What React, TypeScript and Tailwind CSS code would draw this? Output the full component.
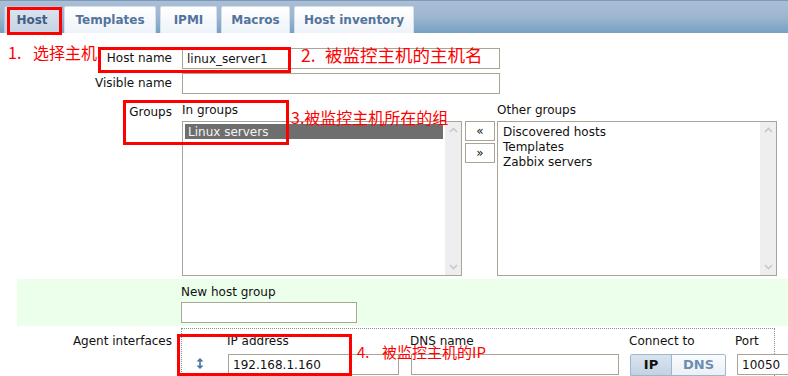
import React from "react";

const tabs = [
  { label: "Host", w: "w-[56px]", active: true },
  { label: "Templates", w: "w-[92px]" },
  { label: "IPMI", w: "w-[57px]" },
  { label: "Macros", w: "w-[69px]" },
  { label: "Host inventory", w: "w-[120px]" },
];

function Chevron({ up }: { up?: boolean }) {
  return (
    <svg width="9" height="6" viewBox="0 0 9 6" className="block">
      <path d={up ? "M1 5 L4.5 1.5 L8 5" : "M1 1 L4.5 4.5 L8 1"} fill="none" stroke="#c8c8c8" strokeWidth="1.6" />
    </svg>
  );
}

function ListBox({ items, selected }: { items: string[]; selected?: number }) {
  return (
    <div className="flex h-[155px] w-[280px] border border-[#a9a697] bg-white">
      <div className="flex-1 pt-[2px] pl-[2px] pr-[2px]">
        {items.map((it, i) => (
          <div
            key={it}
            className={
              i === selected
                ? "h-[15px] bg-[#6e6e6e] pl-[3px] leading-[16px] text-[#f4f4f4]"
                : "h-[15px] pl-[3px] leading-[16px] text-[#111]"
            }
          >
            {it}
          </div>
        ))}
      </div>
      <div className="flex w-[16px] flex-col items-center justify-between bg-[#eeeeee] py-[5px]">
        <Chevron up />
        <Chevron />
      </div>
    </div>
  );
}

function Input({ w, value }: { w: string; value?: string }) {
  return (
    <div className={`${w} h-[21px] shrink-0 border border-[#a9a697] bg-white pl-[4px] leading-[20px] text-[#111]`}>
      {value}
    </div>
  );
}

function Row({ label, children, className }: { label: string; children: React.ReactNode; className?: string }) {
  return (
    <div className={`flex ${className ?? ""}`}>
      <div className="w-[172px] shrink-0 text-right leading-[21px]">{label}</div>
      <div className="ml-[10px]">{children}</div>
    </div>
  );
}

export default function App() {
  return (
    <div
      className="relative h-[376px] w-[788px] overflow-hidden bg-white text-[12px] text-[#111]"
      style={{ fontFamily: '"DejaVu Sans", Verdana, sans-serif' }}
    >
      {/* tab bar */}
      <div className="flex h-[33px] items-end gap-[4px] border-t border-[#7e99b8] bg-gradient-to-b from-[#a9bfd6] via-[#9db6d0] to-[#76a0c5] pl-[4px]">
        {tabs.map((t) => (
          <div
            key={t.label}
            className={`${t.w} flex h-[27px] items-center justify-center rounded-t-[2px] border border-b-0 text-[12px] font-bold ${
              t.active
                ? "border-[#b8c8da] bg-gradient-to-b from-[#dce5ef] to-[#c6d3e2] text-[#3f5f86]"
                : "border-[#d6e0eb] bg-gradient-to-b from-[#ffffff] to-[#eef3f8] text-[#52739c]"
            }`}
          >
            {t.label}
          </div>
        ))}
      </div>

      {/* form */}
      <Row label="Host name" className="mt-[15px]">
        <Input w="w-[318px]" value="linux_server1" />
      </Row>
      <Row label="Visible name" className="mt-[4px]">
        <Input w="w-[318px]" />
      </Row>

      <div className="mt-[8px] flex">
        <div className="w-[172px] shrink-0 pt-[3px] text-right leading-[15px]">Groups</div>
        <div className="ml-[10px] flex">
          <div>
            <div className="h-[19px] pt-[1px] leading-[15px]">In groups</div>
            <ListBox items={["Linux servers"]} selected={0} />
          </div>
          <div className="ml-[3px] flex flex-col gap-[2px] pt-[19px]">
            {["«", "»"].map((b) => (
              <div key={b} className="flex h-[20px] w-[30px] items-center justify-center border border-[#a9a697] bg-white text-[12px] leading-none">
                {b}
              </div>
            ))}
          </div>
          <div className="ml-[2px]">
            <div className="h-[19px] pt-[1px] leading-[15px]">Other groups</div>
            <ListBox items={["Discovered hosts", "Templates", "Zabbix servers"]} />
          </div>
        </div>
      </div>

      <div className="ml-[17px] mt-[3px] h-[47px] bg-[#ebffea] pl-[164px] pt-[6px]">
        <div className="h-[17px] leading-[15px]">New host group</div>
        <Input w="w-[176px]" />
      </div>

      <div className="mt-[2px] flex">
        <div className="w-[172px] shrink-0 pt-[6px] text-right leading-[15px]">Agent interfaces</div>
        <div className="ml-[9px] h-[60px] w-[594px] shrink-0 border-l border-t border-r border-dotted border-[#7d8ea3] pt-[5px]">
          <div className="flex h-[20px] leading-[15px]">
            <div className="ml-[45px] w-[183px] shrink-0">IP address</div>
            <div className="w-[219px] shrink-0">DNS name</div>
            <div className="w-[106px] shrink-0">Connect to</div>
            <div className="shrink-0">Port</div>
          </div>
          <div className="flex items-start">
            <svg width="8" height="11" viewBox="0 0 8 11" className="ml-[14px] mt-[4px] shrink-0">
              <path d="M4 0 L7.5 3.5 L0.5 3.5 Z M4 11 L7.5 7.5 L0.5 7.5 Z" fill="#4a73a6" />
              <rect x="3.2" y="3" width="1.6" height="5" fill="#4a73a6" />
            </svg>
            <div className="ml-[24px] shrink-0">
              <Input w="w-[171px]" value="192.168.1.160" />
            </div>
            <div className="ml-[12px] shrink-0">
              <Input w="w-[208px]" />
            </div>
            <div className="ml-[11px] flex h-[22px] shrink-0 overflow-hidden rounded-t-[2px] border border-[#9fb5cd] text-[13px] font-bold">
              <div className="flex w-[41px] items-center justify-center border-r border-[#9fb5cd] bg-gradient-to-b from-[#d9e4ee] to-[#c3d2e2] text-[#111]">IP</div>
              <div className="flex w-[53px] items-center justify-center bg-gradient-to-b from-[#fbfcfd] to-[#eaf0f6] text-[#6d8cb2]">DNS</div>
            </div>
            <div className="ml-[11px] shrink-0">
              <Input w="w-[70px]" value="10050" />
            </div>
          </div>
        </div>
      </div>

      {/* annotations */}
      <div
        className="pointer-events-none absolute inset-0 text-[#ff0000]"
        style={{ fontFamily: '"Noto Sans CJK SC", "DejaVu Sans", sans-serif' }}
      >
        <div className="absolute left-[7px] top-[7px] h-[28px] w-[55px] border-[3px] border-[#ff0000]" />
        <div className="absolute left-[98px] top-[47px] h-[26px] w-[193px] border-[3px] border-[#ff0000]" />
        <div className="absolute left-[123px] top-[100px] h-[45px] w-[166px] border-[3px] border-[#ff0000]" />
        <div className="absolute left-[177px] top-[334px] h-[42px] w-[175px] border-[3px] border-[#ff0000]" />

        <div className="absolute left-[8px] top-[42px] flex text-[16px] leading-[20px]">
          <span className="w-[25px]">1.</span>
          <span>选择主机</span>
        </div>
        <div className="absolute left-[301px] top-[44px] flex text-[17.5px] leading-[22px]">
          <span className="w-[24px]">2.</span>
          <span>被监控主机的主机名</span>
        </div>
        <div className="absolute left-[291px] top-[107px] text-[16px] leading-[20px]">3.被监控主机所在的组</div>
        <div className="absolute left-[357px] top-[342px] flex text-[15px] leading-[20px]">
          <span className="w-[25px]">4.</span>
          <span>被监控主机的IP</span>
        </div>
      </div>
    </div>
  );
}
